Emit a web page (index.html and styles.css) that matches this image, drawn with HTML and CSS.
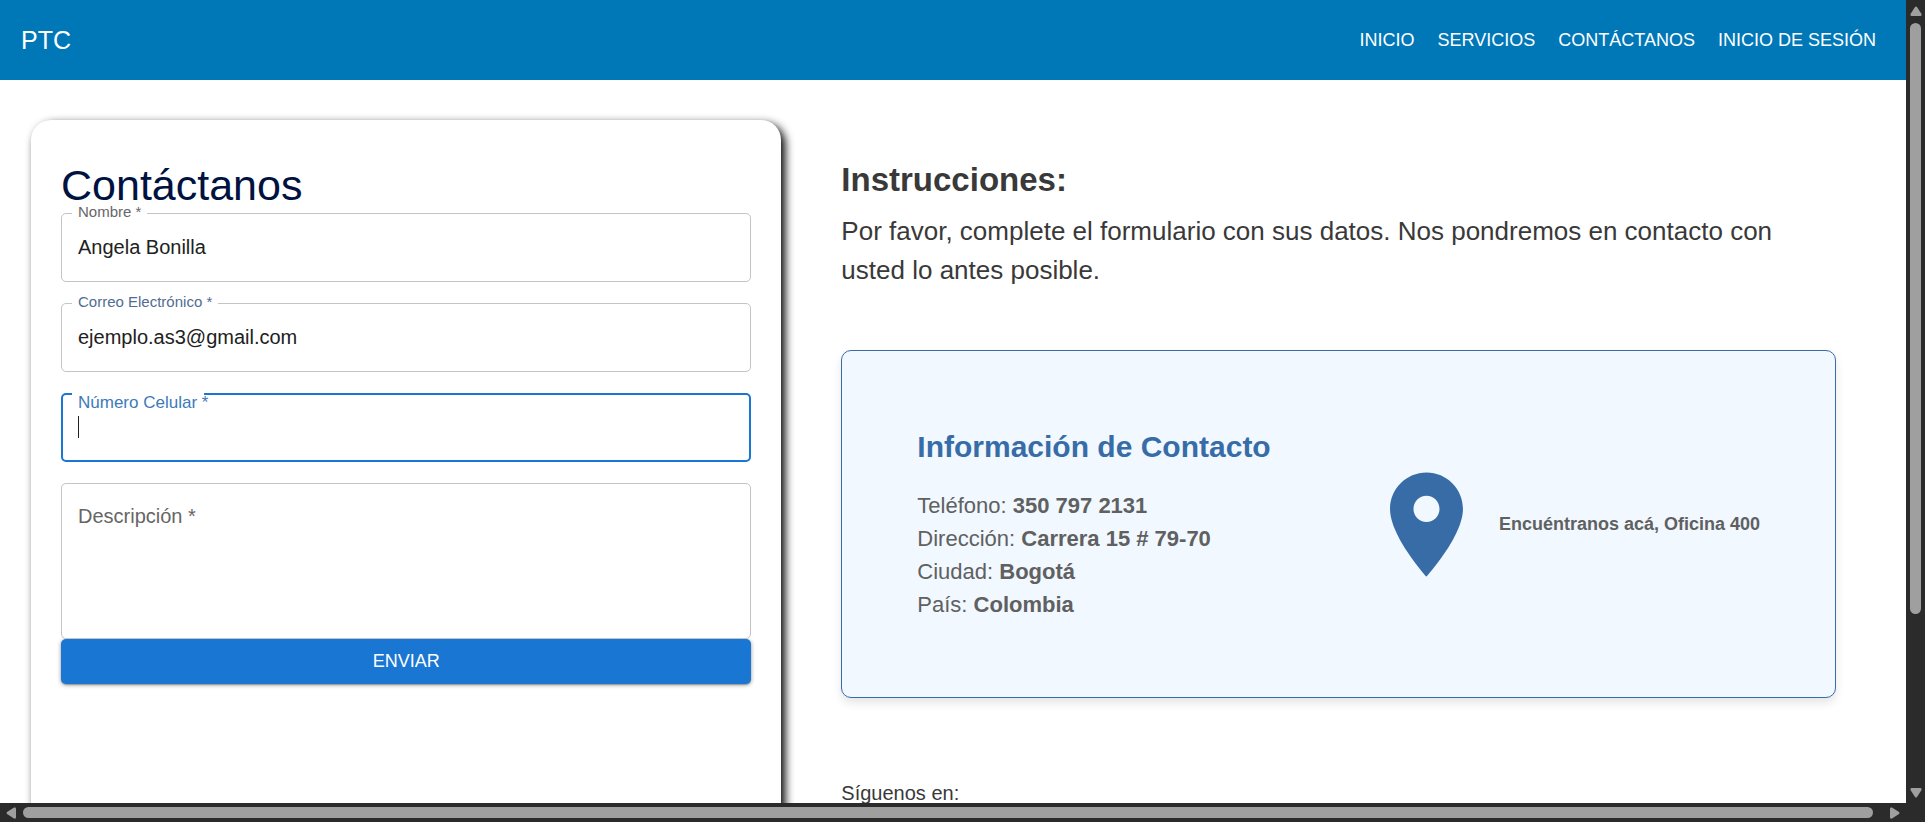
FILE: index.html
```html
<!DOCTYPE html>
<html lang="es">
<head>
<meta charset="utf-8">
<meta name="viewport" content="width=device-width, initial-scale=1">
<title>PTC - Contáctanos</title>
<link rel="stylesheet" href="styles.css">
</head>
<body>
<div class="window">
  <div class="page">
    <header class="topbar">
      <span class="brand">PTC</span>
      <nav class="nav">
        <a href="#inicio">INICIO</a>
        <a href="#servicios">SERVICIOS</a>
        <a href="#contacto">CONTÁCTANOS</a>
        <a href="#sesion">INICIO DE SESIÓN</a>
      </nav>
    </header>
    <main class="content">
      <form class="card">
        <h1 class="card-title">Contáctanos</h1>
        <div class="fields">
          <div class="field">
            <input class="control" id="nombre" type="text" value="Angela Bonilla">
            <label class="label" for="nombre">Nombre *</label>
          </div>
          <div class="field">
            <input class="control" id="correo" type="email" value="ejemplo.as3@gmail.com">
            <label class="label label-blue" for="correo">Correo Electrónico *</label>
          </div>
          <div class="field field-active">
            <input class="control" id="celular" type="tel">
            <label class="label" for="celular">Número Celular *</label>
            <span class="caret"></span>
          </div>
          <div class="field">
            <textarea class="control control-area" id="descripcion"></textarea>
            <label class="label label-inside" for="descripcion">Descripción *</label>
          </div>
        </div>
        <button class="submit" type="button">ENVIAR</button>
      </form>
      <section class="info">
        <h2 class="info-title">Instrucciones:</h2>
        <p class="info-text">Por favor, complete el formulario con sus datos. Nos pondremos en contacto con usted lo antes posible.</p>
        <div class="contact">
          <div class="contact-data">
            <h3 class="contact-title">Información de Contacto</h3>
            <p>Teléfono: <strong>350 797 2131</strong></p>
            <p>Dirección: <strong>Carrera 15 # 79-70</strong></p>
            <p>Ciudad: <strong>Bogotá</strong></p>
            <p>País: <strong>Colombia</strong></p>
          </div>
          <div class="place">
            <svg class="pin" viewBox="0 0 24 24" aria-hidden="true"><path d="M12 2C8.13 2 5 5.13 5 9c0 5.25 7 13 7 13s7-7.75 7-13c0-3.87-3.13-7-7-7zm0 9.5c-1.38 0-2.500-1.120-2.500-2.500s1.120-2.500 2.500-2.500 2.500 1.120 2.500 2.500-1.120 2.500-2.500 2.500z"/></svg>
            <span class="place-text">Encuéntranos acá, Oficina 400</span>
          </div>
        </div>
        <p class="follow">Síguenos en:</p>
      </section>
    </main>
  </div>
  <div class="bar bar-y" aria-hidden="true">
    <svg class="arrow" viewBox="0 0 12 10"><path d="M5 1Q6 0 7 1L11.500 8Q12 10 10.500 10H1.500Q0 10 .5 8Z"/></svg>
    <div class="track"><div class="thumb thumb-y"></div></div>
    <svg class="arrow" viewBox="0 0 12 10"><path d="M5 9Q6 10 7 9L11.500 2Q12 0 10.500 0H1.500Q0 0 .5 2Z"/></svg>
  </div>
  <div class="bar bar-x" aria-hidden="true">
    <svg class="arrow-x" viewBox="0 0 10 12"><path d="M1 5Q0 6 1 7L8 11.500Q10 12 10 10.500V1.500Q10 0 8 .5Z"/></svg>
    <div class="thumb thumb-x"></div>
    <svg class="arrow-x" viewBox="0 0 10 12"><path d="M9 5Q10 6 9 7L2 11.500Q0 12 0 10.500V1.500Q0 0 2 .5Z"/></svg>
  </div>
</div>
</body>
</html>
```
FILE: styles.css
```css
* { box-sizing: border-box; }

body {
  margin: 0;
  background: #fff;
  color: #393939;
  font-family: "Liberation Sans", Arial, sans-serif;
  font-size: 20px;
}

h1, h2, h3, p { margin: 0; }

.window {
  display: grid;
  grid-template-columns: minmax(0, 1fr) 19px;
  grid-template-rows: minmax(0, 1fr) 19px;
  height: 100vh;
  background: #2b2b2b;
}

.page {
  display: flex;
  flex-direction: column;
  overflow: hidden;
  background: #fff;
}

/* Top bar */
.topbar {
  display: flex;
  flex: none;
  align-items: center;
  justify-content: space-between;
  height: 80px;
  padding: 0 30px 0 21px;
  background: #0077b7;
  color: #fff;
}

.brand { font-size: 25px; }

.nav {
  display: flex;
  gap: 23px;
  font-size: 18px;
}

.nav a {
  color: inherit;
  text-decoration: none;
}

/* Two columns */
.content {
  display: grid;
  flex: none;
  grid-template-columns: 43fr 57fr;
  gap: 60px;
  padding: 40px 70px 40px 31px;
}

.card {
  min-height: 750px;
  padding: 39px 30px;
  border-radius: 20px;
  background: #fff;
  box-shadow: 4px 4px 10px #000;
}

.card-title {
  margin-bottom: 1px;
  color: #00123f;
  font-size: 43px;
  font-weight: 400;
  line-height: 53px;
}

.fields {
  display: grid;
  gap: 21px;
}

.field {
  position: relative;
  display: flex;
}

.control {
  width: 100%;
  height: 69px;
  padding: 0 16px;
  border: 1px solid #c4c4c4;
  border-radius: 5px;
  outline: 0;
  background: #fff;
  color: #212121;
  font: inherit;
}

.control-area {
  height: 156px;
  padding: 20px 16px;
  resize: none;
}

.label {
  position: absolute;
  top: -11px;
  left: 11px;
  padding: 0 6px;
  background: #fff;
  color: #666;
  font-size: 15px;
  line-height: 20px;
  white-space: nowrap;
}

.label-blue { color: #4f6d92; }

.label-inside {
  top: 23px;
  font-size: 20px;
}

.field-active .control { border: 2px solid #1976d2; }

.field-active .label {
  top: 0;
  padding-right: 0;
  background: linear-gradient(#fff, #fff) no-repeat 0 0 / calc(100% - 4px) 100%;
  color: #3d7ab9;
  font-size: 17px;
}

.caret {
  position: absolute;
  top: 23px;
  left: 17px;
  width: 1px;
  height: 22px;
  background: #212121;
}

.submit {
  display: block;
  width: 100%;
  height: 45px;
  border: 0;
  border-radius: 5px;
  background: #1976d2;
  box-shadow: 0 1px 4px rgba(0, 0, 0, .4), 0 1px 1px rgba(0, 0, 0, .2);
  color: #fff;
  font: inherit;
  font-size: 18px;
}

/* Instructions and contact details */
.info { padding-top: 40px; }

.info-title {
  margin-bottom: 12px;
  font-size: 33px;
  line-height: 40px;
}

.info-text {
  font-size: 26px;
  line-height: 39px;
}

.contact {
  display: flex;
  align-items: center;
  justify-content: space-between;
  margin: 60px 0 80px;
  padding: 76px 75px;
  border: 1px solid #376ca7;
  border-radius: 10px;
  background: #f1f8ff;
  box-shadow: 0 5px 10px rgba(0, 0, 0, .1);
  color: #606060;
  font-size: 22px;
  line-height: 33px;
}

.contact-title {
  margin-bottom: 22px;
  color: #376ca7;
  font-size: 30px;
  line-height: 40px;
}

.place {
  display: flex;
  align-items: center;
  gap: 10px;
}

.pin {
  flex: none;
  width: 125px;
  height: 125px;
  fill: #376ca7;
}

.place-text {
  font-size: 18px;
  font-weight: 700;
}

.follow { line-height: 30px; }

/* Scroll bars */
.bar {
  display: flex;
  align-items: center;
  background: #2b2b2b;
}

.bar-y {
  flex-direction: column;
  gap: 7px;
  padding: 6px 0 5px;
}

.bar-x {
  gap: 7px;
  padding: 0 6px;
}

.track {
  flex: 1;
  width: 11px;
}

.thumb {
  border-radius: 6px;
  background: #9f9f9f;
}

.thumb-y { height: 78%; }

.thumb-x {
  flex: 1;
  height: 11px;
  margin-right: 10px;
}

.arrow, .arrow-x {
  flex: none;
  width: 12px;
  height: 10px;
  fill: #9f9f9f;
}

.arrow-x {
  width: 10px;
  height: 12px;
}
```
